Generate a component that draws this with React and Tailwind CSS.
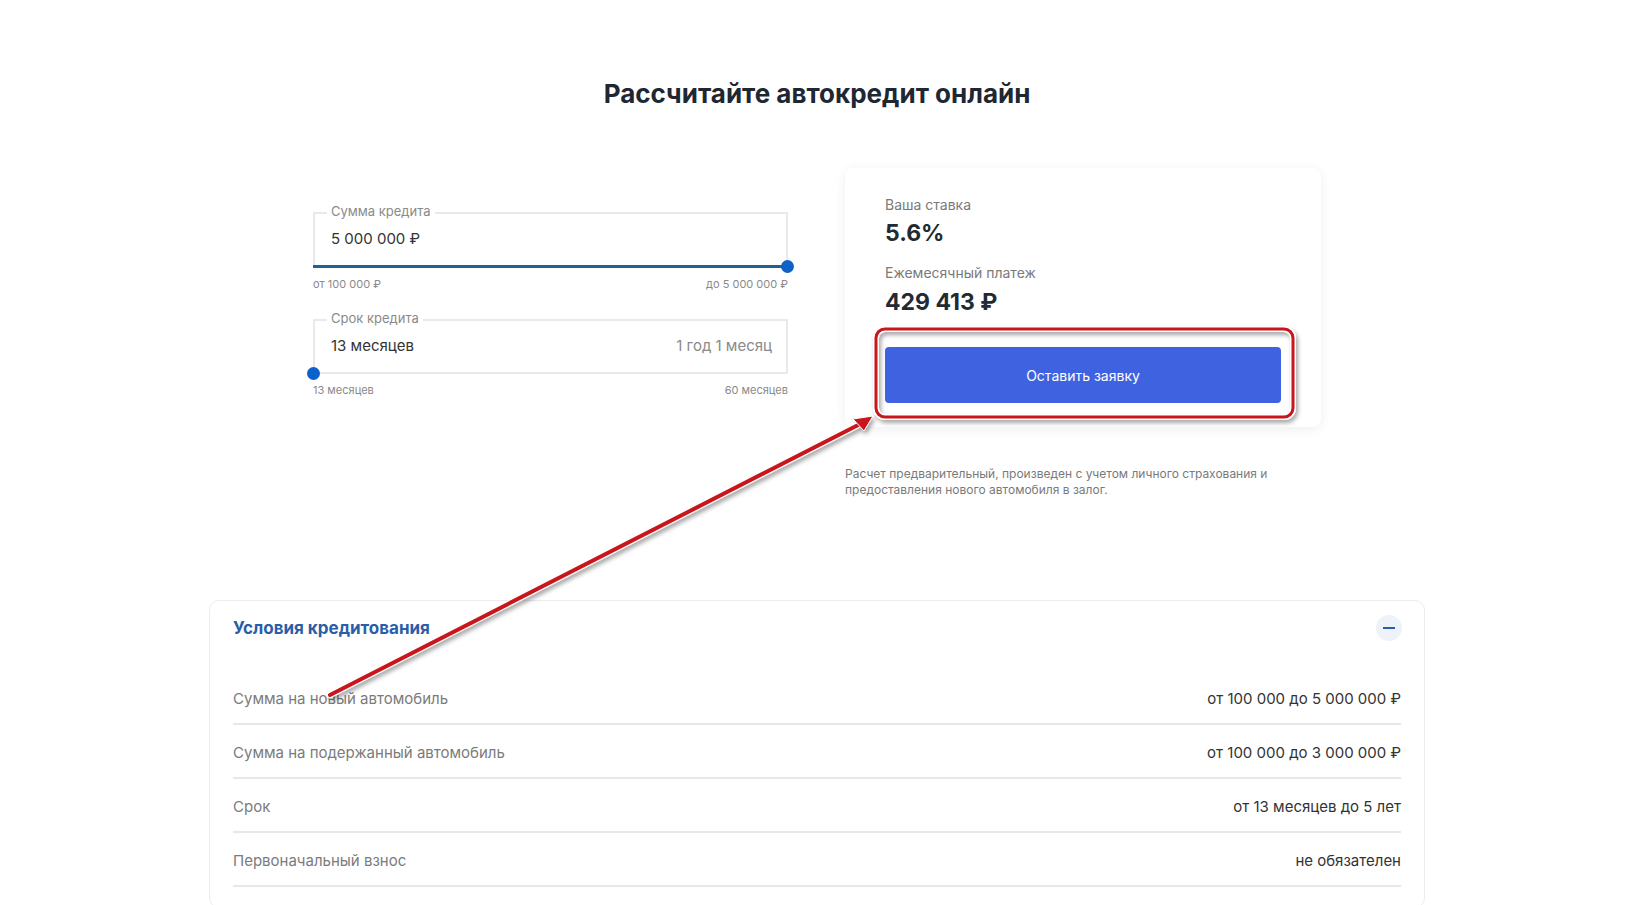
import React from 'react';

const font = { fontFamily: 'Inter, "Open Sans", sans-serif' };

function RangeField({ label, value, hint, from, to, filled }) {
  return (
    <div>
      <div className="relative">
        <div className="h-[53px] border-2 border-b-0 border-[#e9e9e9] flex items-center justify-between pl-[16px] pr-[14px] text-[15px] text-[#333]">
          <span>{value}</span>
          {hint && <span className="text-[#8a8a8a]">{hint}</span>}
        </div>
        <span className="absolute left-[14px] -top-[9px] bg-white px-[4px] text-[13px] leading-[16px] text-[#8a8a8a]">
          {label}
        </span>
        <div className={filled ? 'relative h-[3px] bg-[#1f6391]' : 'relative h-[2px] bg-[#e9e9e9]'}>
          <span
            className={
              filled
                ? 'absolute -right-[6px] -top-[5px] w-[13px] h-[13px] rounded-full bg-[#0d62c9]'
                : 'absolute -left-[6px] -top-[5px] w-[13px] h-[13px] rounded-full bg-[#0d62c9]'
            }
          />
        </div>
      </div>
      <div className="flex justify-between mt-[9px] text-[11px] leading-[14px] text-[#8a8a8a]">
        <span>{from}</span>
        <span>{to}</span>
      </div>
    </div>
  );
}

const rows = [
  ['Сумма на новый автомобиль', 'от 100 000 до 5 000 000 ₽'],
  ['Сумма на подержанный автомобиль', 'от 100 000 до 3 000 000 ₽'],
  ['Срок', 'от 13 месяцев до 5 лет'],
  ['Первоначальный взнос', 'не обязателен'],
];

export default function App() {
  return (
    <div className="relative w-[1634px] h-[905px] overflow-hidden bg-white" style={font}>
      {/* Title */}
      <h1 className="pt-[78px] text-center text-[26px] leading-[32px] font-bold text-[#1f2733]">
        Рассчитайте автокредит онлайн
      </h1>

      {/* Calculator */}
      <div className="mt-[58px] flex justify-center gap-[57px]">
        <div className="w-[475px] pt-[44px]">
          <RangeField
            label="Сумма кредита"
            value="5 000 000 ₽"
            from="от 100 000 ₽"
            to="до 5 000 000 ₽"
            filled
          />
          <div className="mt-[28px]">
            <RangeField
              label="Срок кредита"
              value="13 месяцев"
              hint="1 год 1 месяц"
              from="13 месяцев"
              to="60 месяцев"
            />
          </div>
        </div>

        <div className="w-[476px]">
          <div className="rounded-[8px] bg-white shadow-[0_2px_12px_rgba(0,0,0,0.07)] pt-[27px] px-[40px] pb-[24px]">
            <div className="text-[14px] leading-[20px] text-[#7a7a7a]">Ваша ставка</div>
            <div className="mt-[4px] text-[23px] leading-[28px] font-bold text-[#222a33]">5.6%</div>
            <div className="mt-[16px] text-[14px] leading-[20px] text-[#7a7a7a]">Ежемесячный платеж</div>
            <div className="mt-[5px] text-[23px] leading-[28px] font-bold text-[#222a33]">429 413 ₽</div>
            <button className="mt-[31px] w-full h-[56px] rounded-[4px] bg-[#3f63e0] text-white text-[14px]">
              Оставить заявку
            </button>
          </div>
          <p className="mt-[39px] w-[440px] text-[12px] leading-[16px] text-[#7a7a7a]">
            Расчет предварительный, произведен с учетом личного страхования и предоставления нового автомобиля в залог.
          </p>
        </div>
      </div>

      {/* Conditions */}
      <div className="mt-[102px] mx-auto w-[1216px] rounded-[10px] border border-[#ececec] px-[23px] pt-[14px] pb-[20px]">
        <div className="flex items-center justify-between">
          <h2 className="text-[17px] leading-[24px] font-bold text-[#2a5ea8]">Условия кредитования</h2>
          <span className="mr-[-1px] flex items-center justify-center w-[26px] h-[26px] rounded-full bg-[#eef3fa]">
            <span className="block w-[12px] h-[2px] bg-[#2a5ea8]" />
          </span>
        </div>
        <div className="mt-[30px]">
          {rows.map(([k, v]) => (
            <div
              key={k}
              className="flex justify-between pt-[18px] pb-[14px] border-b-2 border-[#e6e9ec] text-[15px] leading-[20px]"
            >
              <span className="text-[#7b7b7b]">{k}</span>
              <span className="text-[#333]">{v}</span>
            </div>
          ))}
        </div>
      </div>

      {/* Annotation overlay */}
      <svg className="absolute left-0 top-0 pointer-events-none" width="1634" height="905">
        <defs>
          <filter id="sh" x="-10%" y="-10%" width="120%" height="120%">
            <feDropShadow dx="2" dy="3" stdDeviation="2" floodColor="#000" floodOpacity="0.35" />
          </filter>
        </defs>
        <g filter="url(#sh)">
          <rect x="876" y="329" width="417" height="88" rx="9" fill="none" stroke="#fff" strokeWidth="6" />
          <rect x="876" y="329" width="417" height="88" rx="9" fill="none" stroke="#c8151b" strokeWidth="3" />
          <line x1="330" y1="695" x2="866" y2="421" stroke="#fff" strokeWidth="6" strokeLinecap="round" />
          <line x1="330" y1="695" x2="866" y2="421" stroke="#c8151b" strokeWidth="4" strokeLinecap="round" />
          <path d="M873 416 L853 419 L864 431 Z" fill="#c8151b" stroke="#fff" strokeWidth="1" />
        </g>
      </svg>
    </div>
  );
}
